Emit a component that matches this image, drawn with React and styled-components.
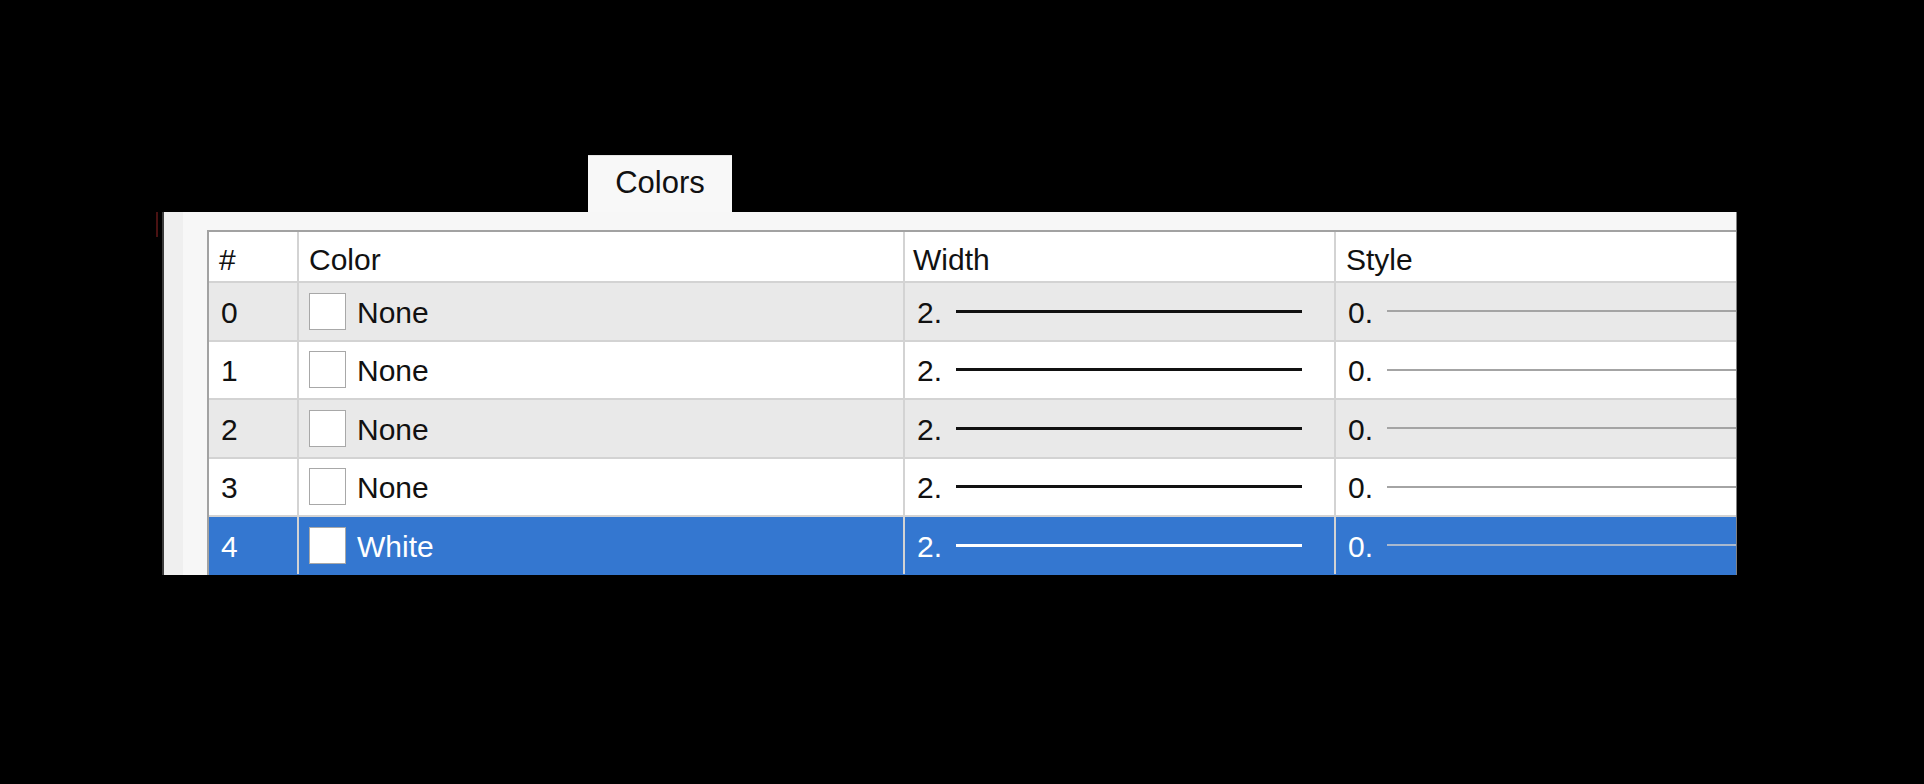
import React from "react";
import styled, { createGlobalStyle } from "styled-components";

const Global = createGlobalStyle`
  html, body { margin: 0; padding: 0; background: #000; }
  body { font-family: "Liberation Sans", Arial, sans-serif; }
`;

const Stage = styled.div`
  width: 1924px;
  height: 784px;
  background: #000;
  padding-top: 155px;
  box-sizing: border-box;
  display: flex;
  flex-direction: column;
`;

const TabStrip = styled.div`
  display: flex;
  padding-left: 588px;
`;

const Tab = styled.div`
  width: 144px;
  height: 57px;
  box-sizing: border-box;
  background: #f8f8f8;
  border-top: 1px solid #e4e4e4;
  display: flex;
  align-items: center;
  justify-content: center;
  padding-bottom: 2px;
  font-size: 31px;
  color: #111;
`;

const PanelRow = styled.div`
  display: flex;
  align-items: flex-start;
  padding-left: 156px;
`;

const Mark = styled.div`
  width: 2px;
  height: 25px;
  background: #4a1212;
  margin-right: 4px;
`;

const Panel = styled.div`
  width: 1575px;
  height: 363px;
  box-sizing: border-box;
  border-left: 2px solid #3c3c3c;
  border-right: 1px solid #808080;
  background: #efefef;
  display: flex;
  overflow: hidden;
`;

const Gutter = styled.div`
  width: 19px;
  flex: none;
`;

const Inner = styled.div`
  flex: 1;
  background: #f7f7f7;
  padding-top: 18px;
  padding-left: 24px;
  display: flex;
  flex-direction: column;
  min-width: 0;
`;

const Table = styled.div`
  flex: 1;
  background: #fff;
  border-top: 2px solid #a2a2a2;
  border-left: 2px solid #a2a2a2;
  display: flex;
  flex-direction: column;
  overflow: hidden;
`;

const Row = styled.div`
  display: grid;
  grid-template-columns: 88px 606px 431px 1fr;
  height: ${(p) => p.$h}px;
  flex: none;
  box-sizing: border-box;
  border-bottom: 2px solid ${(p) => (p.$selected ? "#3477d0" : "#d3d3d3")};
  background: ${(p) =>
    p.$selected ? "#3477d0" : p.$shade ? "#e9e9e9" : "#ffffff"};
  color: ${(p) => (p.$selected ? "#ffffff" : "#111111")};
  font-size: 30px;
`;

const Cell = styled.div`
  display: flex;
  align-items: center;
  box-sizing: border-box;
  padding-left: ${(p) => p.$pl ?? 11}px;
  padding-top: ${(p) => p.$pt ?? 3}px;
  border-left: ${(p) => (p.$first ? "none" : "2px solid #d3d3d3")};
  min-width: 0;
  white-space: nowrap;
`;

const Swatch = styled.span`
  width: 37px;
  height: 37px;
  box-sizing: border-box;
  background: #fff;
  border: 1px solid #a8a8a8;
  flex: none;
  margin-right: 11px;
  margin-top: -3px;
`;

const WidthLine = styled.span`
  width: 346px;
  height: 3px;
  flex: none;
  margin-left: 14px;
  margin-top: -3px;
  background: ${(p) => (p.$selected ? "#ffffff" : "#111111")};
`;

const StyleLine = styled.span`
  flex: 1;
  height: 2px;
  margin-left: 14px;
  margin-top: -3px;
  background: ${(p) => (p.$selected ? "#a9b9cf" : "#a4a4a4")};
`;

const rows = [
  { n: 0, color: "None" },
  { n: 1, color: "None" },
  { n: 2, color: "None" },
  { n: 3, color: "None" },
  { n: 4, color: "White", selected: true },
];

export default function App() {
  return (
    <>
      <Global />
      <Stage>
        <TabStrip>
          <Tab>Colors</Tab>
        </TabStrip>
        <PanelRow>
          <Mark />
          <Panel>
            <Gutter />
            <Inner>
              <Table>
                <Row $h={51}>
                  <Cell $first $pl={10} $pt={6}>#</Cell>
                  <Cell $pl={10} $pt={6}>Color</Cell>
                  <Cell $pl={8} $pt={6}>Width</Cell>
                  <Cell $pl={10} $pt={6}>Style</Cell>
                </Row>
                {rows.map((r, i) => (
                  <Row
                    key={r.n}
                    $h={58.5}
                    $shade={i % 2 === 0}
                    $selected={r.selected}
                  >
                    <Cell $first $pl={12}>{r.n}</Cell>
                    <Cell $pl={10}>
                      <Swatch />
                      {r.color}
                    </Cell>
                    <Cell $pl={12}>
                      2.
                      <WidthLine $selected={r.selected} />
                    </Cell>
                    <Cell $pl={12}>
                      0.
                      <StyleLine $selected={r.selected} />
                    </Cell>
                  </Row>
                ))}
              </Table>
            </Inner>
          </Panel>
        </PanelRow>
      </Stage>
    </>
  );
}
